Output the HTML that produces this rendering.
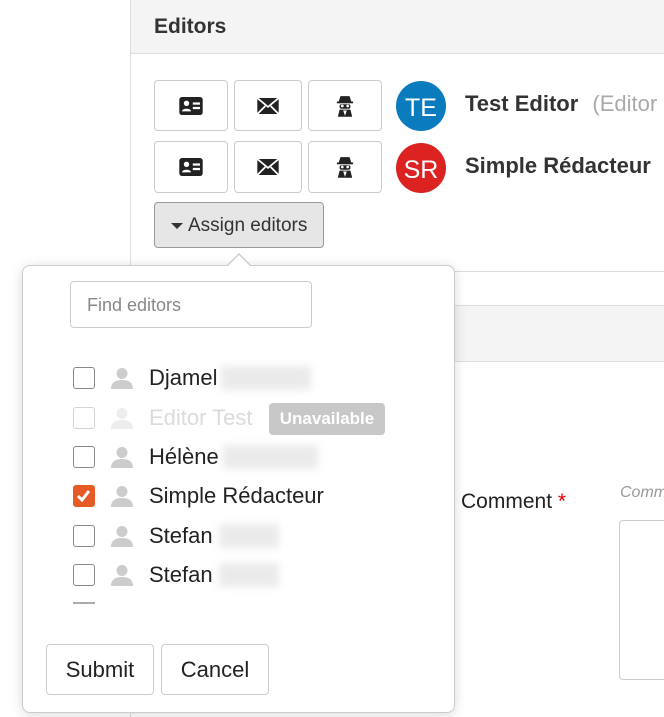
<!DOCTYPE html>
<html><head><meta charset="utf-8"><style>
*{box-sizing:border-box}
body{margin:0;width:664px;height:717px;overflow:hidden;background:#fff;font-family:"Liberation Sans",sans-serif;color:#333;position:relative}
.a{position:absolute}
.btn{position:absolute;border:1px solid #ccc;border-radius:4px;background:#fff;display:flex;align-items:center;justify-content:center}
.row{position:absolute;left:73px;height:22px;display:flex;align-items:center}
.cb{width:22px;height:22px;border:1.5px solid #888;border-radius:3px;background:#fff}
.pi{margin-left:15px;width:24px;height:22px}
.nm{margin-left:15px;font-size:22px;color:#222}
.blur{display:inline-block;height:24px;background:#ddd;filter:blur(4px);opacity:.6;vertical-align:middle}
</style></head><body>
<div class="a" style="left:130px;top:0;width:534px;height:717px;border-left:1px solid #ddd"></div>
<div class="a" style="left:131px;top:0;width:533px;height:54px;background:#f4f4f4;border-bottom:1px solid #ddd"></div>
<div class="a" style="left:154px;top:15px;font-size:21px;font-weight:bold;color:#333">Editors</div>
<div class="a" style="left:131px;top:271px;width:533px;height:1px;background:#ddd"></div>
<div class="a" style="left:131px;top:305px;width:533px;height:57px;background:#f4f4f4;border-top:1px solid #ddd;border-bottom:1px solid #ddd"></div>

<svg width="0" height="0" style="position:absolute"><defs>
<symbol id="card" viewBox="0 0 26 20"><rect x="0" y="0" width="26" height="20" rx="3" fill="#222"/><circle cx="8" cy="7" r="3" fill="#fff"/><path d="M3 16c0-4 10-4 10 0z" fill="#fff"/><rect x="15" y="6" width="8" height="2.5" fill="#fff"/><rect x="15" y="11" width="8" height="2.5" fill="#fff"/></symbol>
<symbol id="mail" viewBox="0 0 24 18"><path d="M0 0h24v18H0z" fill="#222"/><path d="M0 0l12 10L24 0M0 18l9-9M24 18l-9-9" stroke="#fff" stroke-width="2" fill="none"/></symbol>
<symbol id="spy" viewBox="0 0 20 24"><path d="M5 1h10l2 6H3z" fill="#222"/><rect x="1" y="7" width="18" height="2" fill="#222"/><rect x="4" y="10" width="12" height="5" rx="2" fill="#222"/><circle cx="7" cy="12" r="1.5" fill="#fff"/><circle cx="13" cy="12" r="1.5" fill="#fff"/><path d="M2 24l2-8h12l2 8z" fill="#222"/><path d="M8 17l2 6 2-6z" fill="#fff"/></symbol>
<symbol id="per" viewBox="0 0 24 22"><circle cx="12" cy="6.5" r="5.5" fill="#ccc"/><path d="M1 22c0-7 5-9 11-9s11 2 11 9z" fill="#ccc"/></symbol>
</defs></svg>

<div class="btn" style="left:154px;top:80px;width:74px;height:51px"><svg width="24" height="18"><use href="#card"/></svg></div>
<div class="btn" style="left:234px;top:80px;width:68px;height:51px"><svg width="22" height="16"><use href="#mail"/></svg></div>
<div class="btn" style="left:308px;top:80px;width:74px;height:51px"><svg width="18" height="22"><use href="#spy"/></svg></div>
<div class="btn" style="left:154px;top:141px;width:74px;height:52px"><svg width="24" height="18"><use href="#card"/></svg></div>
<div class="btn" style="left:234px;top:141px;width:68px;height:52px"><svg width="22" height="16"><use href="#mail"/></svg></div>
<div class="btn" style="left:308px;top:141px;width:74px;height:52px"><svg width="18" height="22"><use href="#spy"/></svg></div>
<div class="a" style="left:396px;top:81px;width:50px;height:50px;border-radius:50%;background:#0a7bbd;color:#fff;font-size:25px;display:flex;align-items:center;justify-content:center;padding-top:4px">TE</div>
<div class="a" style="left:396px;top:143px;width:50px;height:50px;border-radius:50%;background:#dd2222;color:#fff;font-size:25px;display:flex;align-items:center;justify-content:center;padding-top:4px">SR</div>
<div class="a" style="left:465px;top:91px;font-size:22px;font-weight:bold;color:#333">Test Editor <span style="font-weight:normal;color:#aaa;margin-left:8px">(Editor</span></div>
<div class="a" style="left:465px;top:153px;font-size:22px;font-weight:bold;color:#333">Simple Rédacteur</div>
<div class="a" style="left:154px;top:202px;width:170px;height:46px;background:#e6e6e6;border:1px solid #999;border-radius:4px;font-size:19px;color:#333;display:flex;align-items:center;padding-left:16px;padding-top:2px"><span style="width:0;height:0;border-left:6px solid transparent;border-right:6px solid transparent;border-top:6px solid #333;margin-right:5px"></span>Assign editors</div>

<div class="a" style="left:461px;top:490px;font-size:21px;color:#222">Comment <span style="color:#e00">*</span></div>
<div class="a" style="left:620px;top:484px;font-size:16px;font-style:italic;color:#999">Comm</div>
<div class="a" style="left:619px;top:520px;width:60px;height:160px;border:1px solid #ccc;border-radius:4px"></div>

<div class="a" style="left:22px;top:265px;width:433px;height:448px;background:#fff;border:1px solid #ccc;border-radius:8px;box-shadow:0 2px 12px rgba(0,0,0,.15)"></div>
<div class="a" style="left:226px;top:253px;width:0;height:0;border-left:13px solid transparent;border-right:13px solid transparent;border-bottom:13px solid #ccc"></div>
<div class="a" style="left:227px;top:255px;width:0;height:0;border-left:12px solid transparent;border-right:12px solid transparent;border-bottom:12px solid #fff"></div>
<div class="a" style="left:70px;top:281px;width:242px;height:47px;border:1px solid #ccc;border-radius:4px;font-size:18px;color:#888;padding:13px 0 0 16px">Find editors</div>

<div class="row" style="top:367px"><div class="cb"></div><svg class="pi"><use href="#per"/></svg><span class="nm">Djamel</span><span class="blur" style="width:90px;margin-left:4px"></span></div>
<div class="row" style="top:407px;opacity:.35"><div class="cb"></div><svg class="pi"><use href="#per"/></svg><span class="nm" style="color:#999">Editor Test</span></div>
<div class="a" style="left:269px;top:403px;width:116px;height:32px;background:#c8c8c8;border-radius:4px;color:#fff;font-weight:bold;font-size:17px;display:flex;align-items:center;justify-content:center">Unavailable</div>
<div class="row" style="top:446px"><div class="cb"></div><svg class="pi"><use href="#per"/></svg><span class="nm">Hélène</span><span class="blur" style="width:95px;margin-left:4px"></span></div>
<div class="row" style="top:485px"><div class="cb" style="background:#e55a25;border-color:#e55a25;position:relative"><svg width="19" height="19" style="position:absolute;left:0;top:0"><path d="M4 10l4 4 7-9" stroke="#fff" stroke-width="3" fill="none"/></svg></div><svg class="pi"><use href="#per"/></svg><span class="nm">Simple Rédacteur</span></div>
<div class="row" style="top:525px"><div class="cb"></div><svg class="pi"><use href="#per"/></svg><span class="nm">Stefan</span><span class="blur" style="width:60px;margin-left:6px"></span></div>
<div class="row" style="top:564px"><div class="cb"></div><svg class="pi"><use href="#per"/></svg><span class="nm">Stefan</span><span class="blur" style="width:60px;margin-left:6px"></span></div>
<div class="a" style="left:73px;top:602px;width:22px;height:2px;background:#aaa"></div>

<div class="btn" style="left:46px;top:644px;width:108px;height:51px;font-size:22px;color:#222">Submit</div>
<div class="btn" style="left:161px;top:644px;width:108px;height:51px;font-size:22px;color:#222">Cancel</div>
</body></html>
